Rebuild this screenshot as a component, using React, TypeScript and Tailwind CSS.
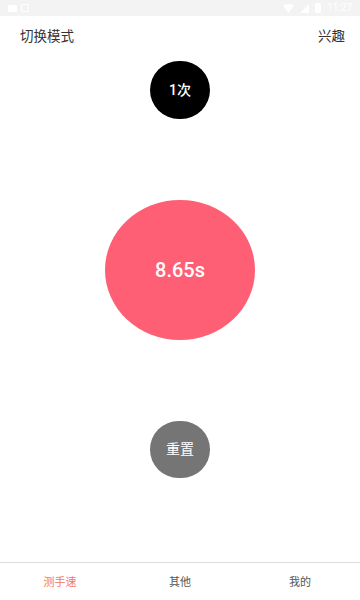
import React from 'react'

const font = { fontFamily: 'Roboto, "Noto Sans CJK SC", "Noto Sans", sans-serif' }

function StatusBar() {
  return (
    <div className="flex h-4 items-center justify-between bg-[#f3f3f3] px-2">
      <div className="flex items-center gap-1">
        <div className="h-[7px] w-[9px] rounded-[1px] bg-white" />
        <div className="h-[8px] w-[8px] rounded-[1px] border border-white" />
      </div>
      <div className="flex items-center gap-1.5">
        <svg width="11" height="9" viewBox="0 0 11 9">
          <path d="M0 1.5 Q5.5 -1.5 11 1.5 L5.5 9 Z" fill="#fff" />
        </svg>
        <svg width="9" height="9" viewBox="0 0 9 9">
          <path d="M9 0 L9 9 L0 9 Z" fill="#fff" />
        </svg>
        <div className="h-[10px] w-[6px] rounded-[1px] bg-white" />
        <span className="text-[10px] leading-none text-white">11:27</span>
      </div>
    </div>
  )
}

export default function App() {
  return (
    <div className="flex h-[600px] w-[360px] flex-col bg-white" style={font}>
      <StatusBar />
      <div className="flex h-10 items-center justify-between pl-5 pr-[15px] text-[13.5px] text-[#333]">
        <span>切换模式</span>
        <span>兴趣</span>
      </div>

      <div className="flex flex-1 flex-col items-center">
        <div className="mt-[5px] flex h-[58px] w-[60px] items-center justify-center rounded-full bg-black text-[14px] font-medium text-white">
          1次
        </div>
        <div className="mt-[81px] flex h-[140px] w-[150px] items-center justify-center rounded-[50%] bg-[#fe5f75] text-[20px] font-medium text-white">
          8.65s
        </div>
        <div className="mt-[81px] flex h-[57px] w-[60px] items-center justify-center rounded-full bg-[#757575] text-[14px] text-white">
          重置
        </div>
      </div>

      <div className="flex h-[38px] items-center border-t border-[#dcdcdc] pt-1 text-[11px]">
        <div className="flex-1 text-center text-[#f3785f]">测手速</div>
        <div className="flex-1 text-center text-[#555]">其他</div>
        <div className="flex-1 text-center text-[#555]">我的</div>
      </div>
    </div>
  )
}
